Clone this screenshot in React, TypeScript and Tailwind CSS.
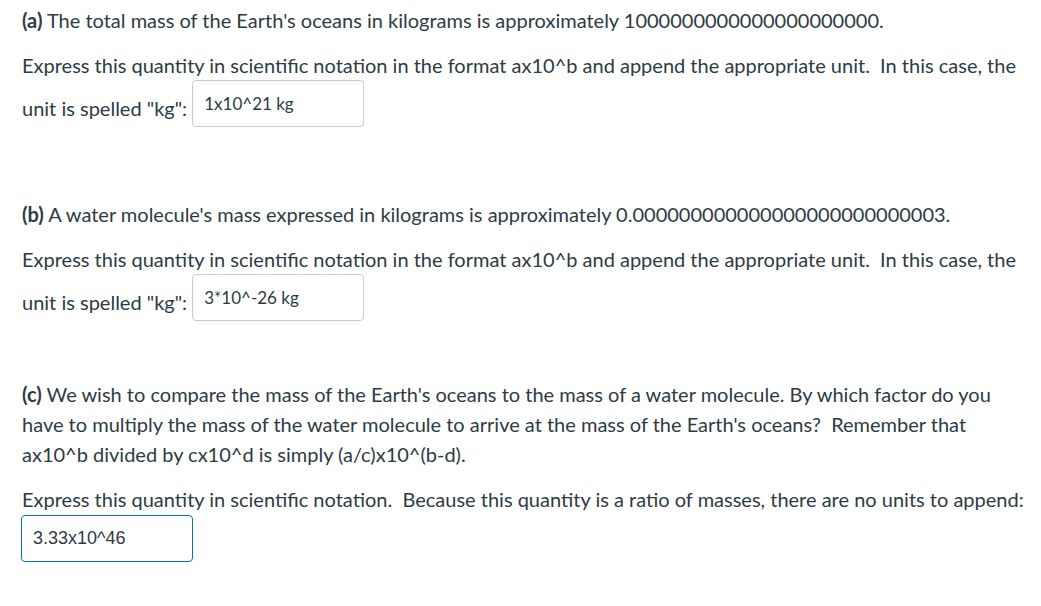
export default function App() {
  return (
    <div className="min-h-screen bg-white pl-[22px] pr-4 pt-[5px] font-['Lato',sans-serif] text-[20px] leading-[30px] text-[#2d3b45]">
      <p>
        <strong>(a)</strong> The total mass of the Earth's oceans in kilograms is approximately 1000000000000000000000.
      </p>
      <p className="mt-[15px]">
        Express this quantity in scientific notation in the format ax10^b and append the appropriate unit.&nbsp; In this case, the unit is spelled "kg":{" "}
        <input
          readOnly
          value="1x10^21 kg"
          className="h-[47px] w-[172px] rounded-[4px] border border-[#c7cdd1] bg-white px-[11px] align-[6px] font-['Lato',sans-serif] text-[17px] text-[#2d3b45] outline-none"
        />
      </p>

      <p className="mt-[72px]">
        <strong>(b)</strong> A water molecule's mass expressed in kilograms is approximately 0.000000000000000000000000003.
      </p>
      <p className="mt-[15px]">
        Express this quantity in scientific notation in the format ax10^b and append the appropriate unit.&nbsp; In this case, the unit is spelled "kg":{" "}
        <input
          readOnly
          value="3*10^-26 kg"
          className="h-[47px] w-[172px] rounded-[4px] border border-[#c7cdd1] bg-white px-[11px] align-[6px] font-['Lato',sans-serif] text-[17px] text-[#2d3b45] outline-none"
        />
      </p>

      <p className="mt-[58px]">
        <strong>(c)</strong> We wish to compare the mass of the Earth's oceans to the mass of a water molecule. By which factor do you have to multiply the mass of the water molecule to arrive at the mass of the Earth's oceans?&nbsp; Remember that ax10^b divided by cx10^d is simply (a/c)x10^(b-d).
      </p>
      <p className="mt-[15px]">
        Express this quantity in scientific notation.&nbsp; Because this quantity is a ratio of masses, there are no units to append:
      </p>
      <div className="mt-[1px]">
        <input
          readOnly
          value="3.33x10^46"
          className="-ml-px h-[47px] w-[172px] rounded-[4px] border border-[#0374b5] bg-white px-[11px] font-['Liberation_Sans',sans-serif] text-[18px] text-[#2d3b45] outline-none"
        />
      </div>
    </div>
  );
}
